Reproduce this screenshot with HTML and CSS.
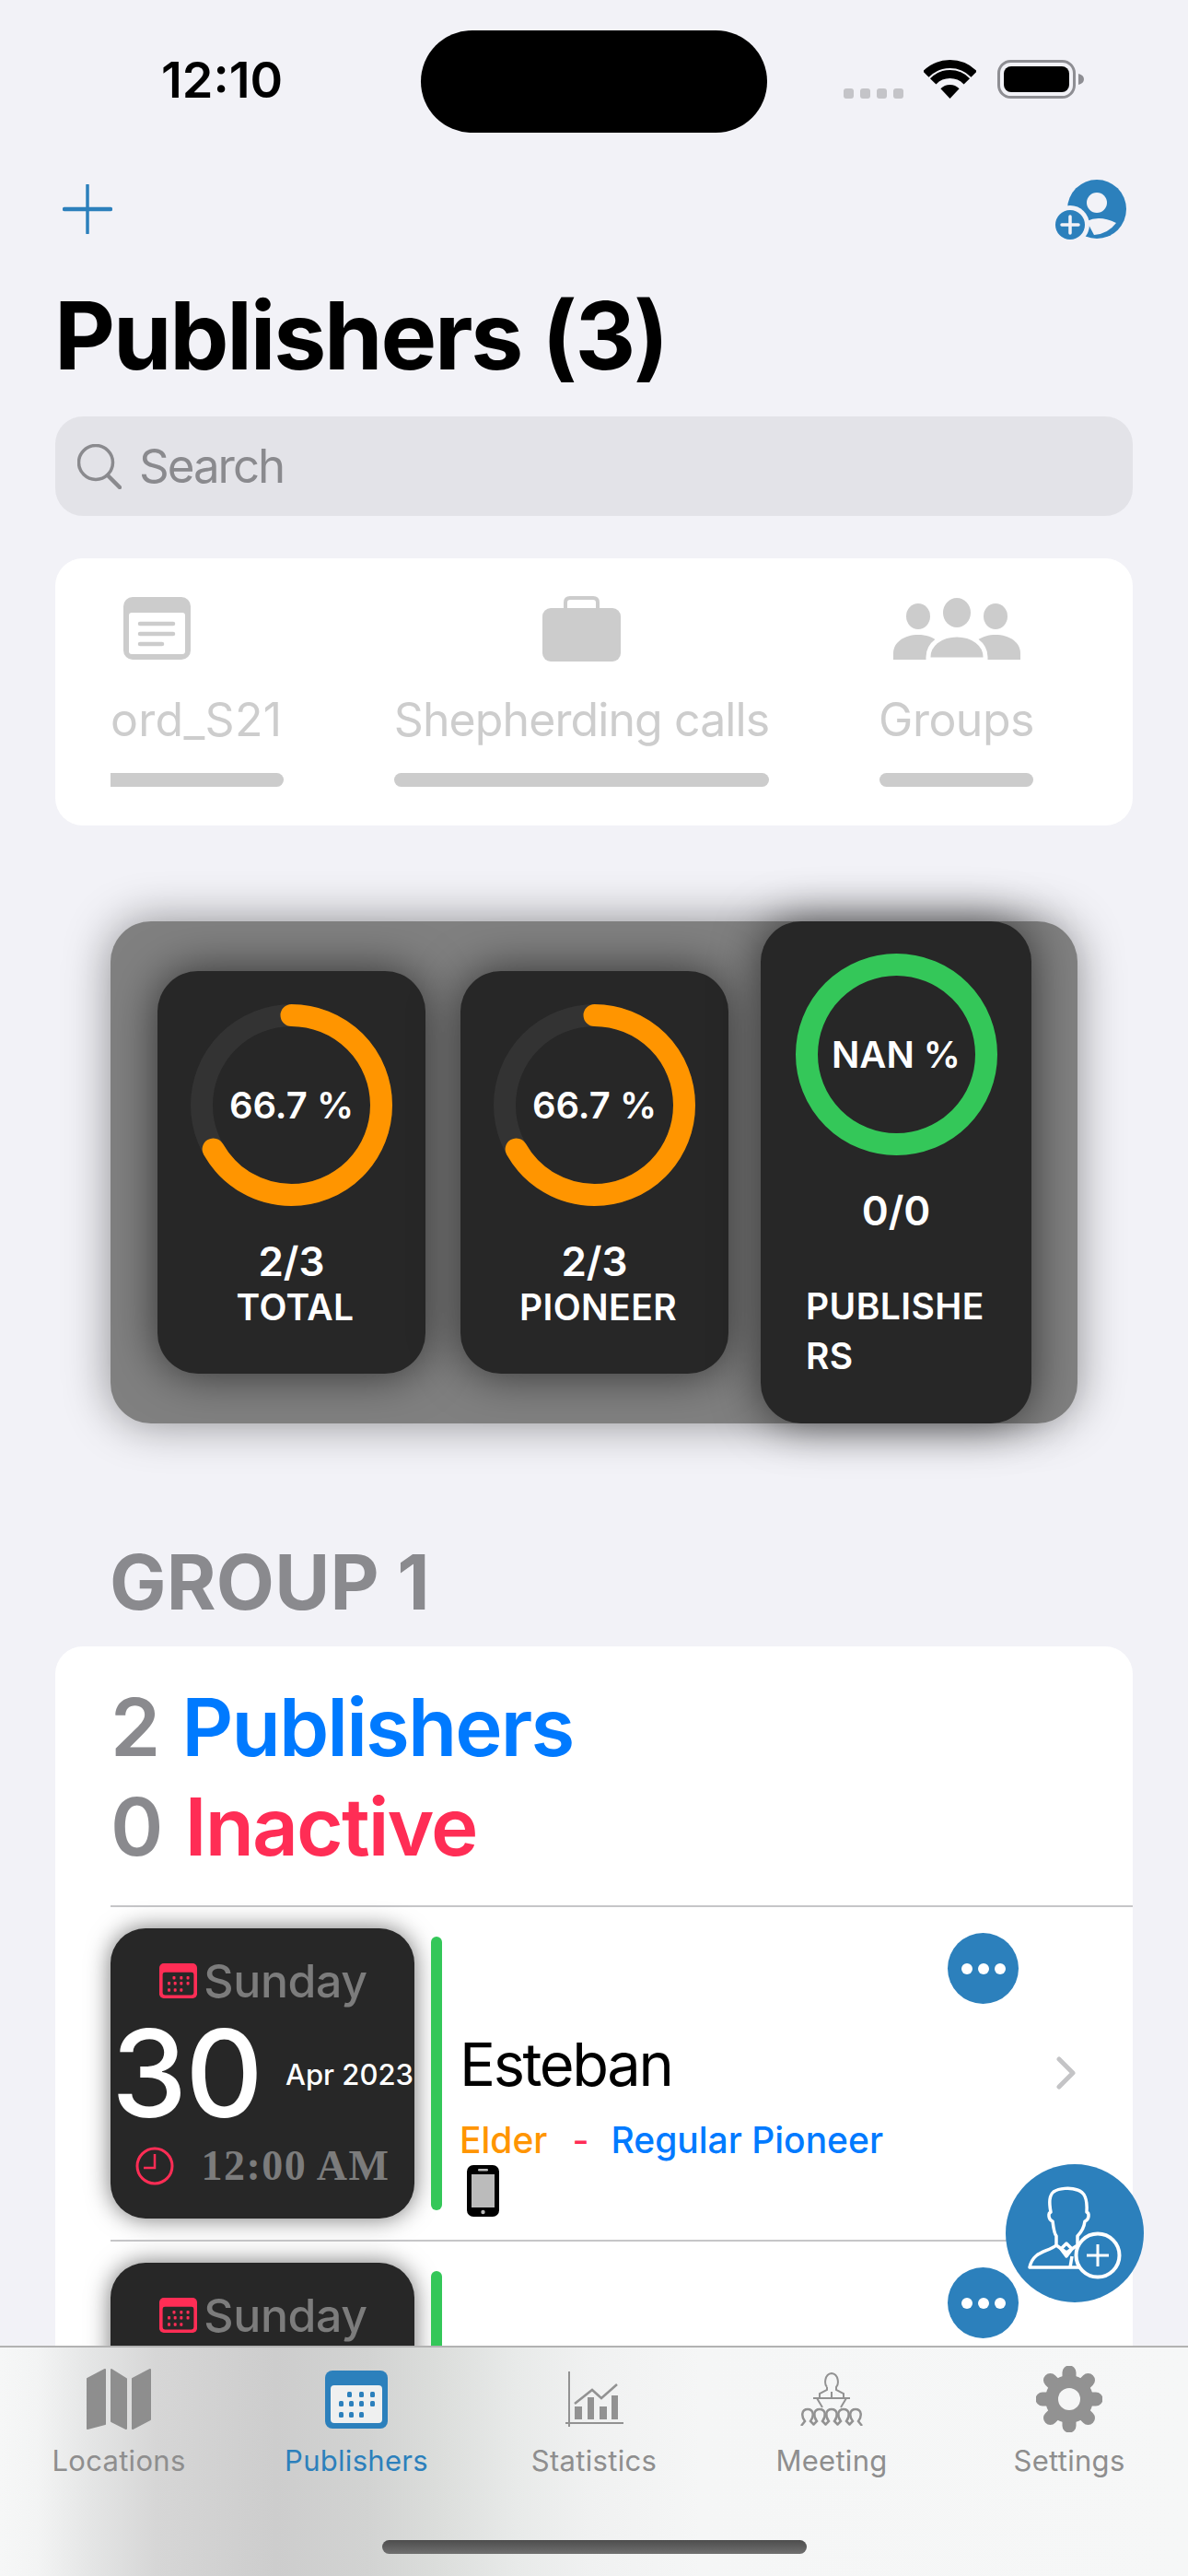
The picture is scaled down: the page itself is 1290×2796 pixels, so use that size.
FILE: index.html
```html
<!DOCTYPE html>
<html lang="en">
<head>
<meta charset="utf-8">
<title>Publishers</title>
<link rel="stylesheet" href="styles.css">
</head>
<body>
<div class="page">
  <div class="status">
    <div class="time">12:10</div>
    <div class="island"></div>
    <div class="status-icons">
      <div class="signal"><i></i><i></i><i></i><i></i></div>
      <svg class="wifi" width="57" height="42" viewBox="0 0 57 42"><path d="M2.3 15.6A36.5 36.5 0 0 1 54.7 15.6M10.2 23.3A25.5 25.5 0 0 1 46.8 23.3" fill="none" stroke="#000" stroke-width="9"/><path d="M28.5 42L18.4 31.3A14 14 0 0 1 38.6 31.3Z" fill="#000"/></svg>
      <svg class="battery" width="94" height="42" viewBox="0 0 94 42"><rect x="1.5" y="1.5" width="82" height="39" rx="13" fill="none" stroke="#8e8e93" stroke-width="3"/><rect x="7" y="7" width="71" height="28" rx="8" fill="#000"/><path d="M88 15C92 16 94 18 94 21S92 26 88 27Z" fill="#8e8e93"/></svg>
    </div>
  </div>

  <div class="navrow">
    <svg width="54" height="54" viewBox="0 0 54 54"><path d="M27 1V53" stroke="#2c80bc" stroke-width="3.5" stroke-linecap="round"/><path d="M2 27H52" stroke="#2c80bc" stroke-width="4.5" stroke-linecap="round"/></svg>
    <svg width="78" height="66" viewBox="0 0 78 66"><circle cx="45" cy="33" r="32" fill="#2c80bc"/><circle cx="45" cy="26" r="11" fill="#f2f2f7"/><path d="M34 46Q48 39 66 48Q57 60 42 61Z" fill="#f2f2f7"/><circle cx="16" cy="50" r="21" fill="#f2f2f7"/><circle cx="16" cy="50" r="16" fill="#2c80bc"/><path d="M16 41V59M7 50H25" stroke="#f2f2f7" stroke-width="3.5" stroke-linecap="round"/></svg>
  </div>

  <h1 class="title">Publishers (3)</h1>

  <div class="search">
    <svg width="48" height="49" viewBox="0 0 48 49"><circle cx="20" cy="20" r="18.5" fill="none" stroke="#8a8a8e" stroke-width="3.5"/><path d="M33 34L46 47" stroke="#8a8a8e" stroke-width="4.5" stroke-linecap="round"/></svg>
    <span>Search</span>
  </div>

  <div class="tabs-card">
    <div class="strip">
      <div class="strip-item first w1">
        <svg class="ticon doc" width="73" height="71" viewBox="0 0 73 71"><rect y="1" width="73" height="68" rx="10" fill="#ccc"/><rect x="6" y="18" width="61" height="45" rx="3" fill="#fff"/><path d="M18 30H54M18 41H54M18 52H42" stroke="#ccc" stroke-width="4.5" stroke-linecap="round"/></svg>
        <span class="strip-label">ord_S21</span>
        <div class="strip-bar"></div>
      </div>
      <div class="strip-item w2">
        <svg class="ticon" width="85" height="71" viewBox="0 0 85 71"><path d="M25 14V7Q25 2 30 2H55Q60 2 60 7V14" fill="none" stroke="#ccc" stroke-width="4"/><rect y="13" width="85" height="58" rx="9" fill="#ccc"/></svg>
        <span class="strip-label">Shepherding calls</span>
        <div class="strip-bar"></div>
      </div>
      <div class="strip-item w3">
        <svg class="ticon" width="138" height="71" viewBox="0 0 138 71"><ellipse cx="27" cy="22" rx="13" ry="14" fill="#ccc"/><ellipse cx="69" cy="18" rx="15" ry="16" fill="#ccc"/><ellipse cx="111" cy="22" rx="13" ry="14" fill="#ccc"/><path d="M0 69V62C0 50 12 42 27 42S54 50 54 62V69Z" fill="#ccc"/><path d="M84 69V62C84 50 96 42 111 42S138 50 138 62V69Z" fill="#ccc"/><path d="M38 69V66C38 52 52 42 69 42S100 52 100 66V69Z" fill="#ccc" stroke="#fff" stroke-width="5"/></svg>
        <span class="strip-label">Groups</span>
        <div class="strip-bar"></div>
      </div>
    </div>
  </div>

  <div class="panel">
    <div class="stat short">
      <div class="ring">
        <svg width="219" height="219" viewBox="0 0 219 219"><circle cx="109.5" cy="109.5" r="97.5" fill="none" stroke="#333" stroke-width="24"/><circle cx="109.5" cy="109.5" r="97.5" fill="none" stroke="#ff9500" stroke-width="24" stroke-linecap="round" stroke-dasharray="408.6 612.6" transform="rotate(-90 109.5 109.5)"/></svg>
        <span class="ring-text">66.7 %</span>
      </div>
      <div class="ratio">2/3</div>
      <div class="stat-label">TOTAL</div>
    </div>
    <div class="stat short">
      <div class="ring">
        <svg width="219" height="219" viewBox="0 0 219 219"><circle cx="109.5" cy="109.5" r="97.5" fill="none" stroke="#333" stroke-width="24"/><circle cx="109.5" cy="109.5" r="97.5" fill="none" stroke="#ff9500" stroke-width="24" stroke-linecap="round" stroke-dasharray="408.6 612.6" transform="rotate(-90 109.5 109.5)"/></svg>
        <span class="ring-text">66.7 %</span>
      </div>
      <div class="ratio">2/3</div>
      <div class="stat-label">PIONEER</div>
    </div>
    <div class="stat tall">
      <div class="ring">
        <svg width="219" height="219" viewBox="0 0 219 219"><circle cx="109.5" cy="109.5" r="97.5" fill="none" stroke="#34c759" stroke-width="24"/></svg>
        <span class="ring-text">NAN %</span>
      </div>
      <div class="ratio">0/0</div>
      <div class="stat-label wrap">PUBLISHERS</div>
    </div>
  </div>

  <h2 class="group-title">GROUP 1</h2>

  <div class="group-card">
    <div class="counts">
      <div class="count"><span class="grey">2</span> <span class="blue">Publishers</span></div>
      <div class="count"><span class="grey">0</span> <span class="red">Inactive</span></div>
    </div>

    <div class="row">
      <div class="date">
        <div class="date-day">
          <svg width="41" height="38" viewBox="0 0 68 63"><rect width="68" height="63" rx="8" fill="#ff2d55"/><rect x="6" y="16" width="56" height="41" rx="4" fill="#272727"/><g fill="#ff2d55"><rect x="24" y="23" width="5" height="6" rx="1.5"/><rect x="37" y="23" width="5" height="6" rx="1.5"/><rect x="49" y="23" width="5" height="6" rx="1.5"/><rect x="15" y="33" width="5" height="6" rx="1.5"/><rect x="26" y="33" width="5" height="6" rx="1.5"/><rect x="37" y="33" width="5" height="6" rx="1.5"/><rect x="49" y="33" width="5" height="6" rx="1.5"/><rect x="15" y="45" width="5" height="6" rx="1.5"/><rect x="26" y="45" width="5" height="6" rx="1.5"/><rect x="37" y="45" width="5" height="6" rx="1.5"/></g></svg>
          <span>Sunday</span>
        </div>
        <div class="date-mid"><span class="date-num">30</span><span class="date-month">Apr 2023</span></div>
        <div class="date-time">
          <svg width="42" height="42" viewBox="0 0 42 42"><circle cx="21" cy="21" r="19" fill="none" stroke="#ff2d55" stroke-width="3"/><path d="M21 8V23H9" fill="none" stroke="#ff2d55" stroke-width="2.5"/></svg>
          <span>12:00 AM</span>
        </div>
      </div>
      <div class="flag"></div>
      <div class="info">
        <div class="name">Esteban</div>
        <div class="roles"><span class="orange">Elder</span><span class="dash">-</span><span class="blue">Regular Pioneer</span></div>
        <svg class="phone" width="35" height="56" viewBox="0 0 35 56"><rect width="35" height="56" rx="7" fill="#000"/><rect x="5" y="10" width="25" height="36" fill="#bbb"/><rect x="12" y="4" width="11" height="2.5" rx="1.2" fill="#bbb"/><circle cx="17.5" cy="51" r="2.2" fill="#bbb"/></svg>
      </div>
      <svg class="chevron" width="21" height="36" viewBox="0 0 21 36"><path d="M3 3L18 18L3 33" fill="none" stroke="#c4c4c6" stroke-width="5" stroke-linecap="round" stroke-linejoin="round"/></svg>
      <div class="more"><i></i><i></i><i></i></div>
    </div>

    <div class="row">
      <div class="date">
        <div class="date-day">
          <svg width="41" height="38" viewBox="0 0 68 63"><rect width="68" height="63" rx="8" fill="#ff2d55"/><rect x="6" y="16" width="56" height="41" rx="4" fill="#272727"/><g fill="#ff2d55"><rect x="24" y="23" width="5" height="6" rx="1.5"/><rect x="37" y="23" width="5" height="6" rx="1.5"/><rect x="49" y="23" width="5" height="6" rx="1.5"/><rect x="15" y="33" width="5" height="6" rx="1.5"/><rect x="26" y="33" width="5" height="6" rx="1.5"/><rect x="37" y="33" width="5" height="6" rx="1.5"/><rect x="49" y="33" width="5" height="6" rx="1.5"/><rect x="15" y="45" width="5" height="6" rx="1.5"/><rect x="26" y="45" width="5" height="6" rx="1.5"/><rect x="37" y="45" width="5" height="6" rx="1.5"/></g></svg>
          <span>Sunday</span>
        </div>
      </div>
      <div class="flag"></div>
      <div class="more"><i></i><i></i><i></i></div>
    </div>
  </div>

  <div class="fab">
    <svg width="150" height="150" viewBox="0 0 150 150"><g fill="none" stroke="#fff" stroke-width="3.5" stroke-linejoin="round"><path d="M51 62C46 60 46 53 49 52C47 42 47 34 52 30C58 26 70 25 78 28C85 30 89 36 88 52C91 53 91 60 86 62C85 70 80 76 78 78V88L66 96L55 88V78C53 76 52 70 51 62Z"/><path d="M55 88C45 96 30 94 26 112H92L85 93L78 88"/><path d="M60 92L66 86L72 92L66 100Z"/><path d="M72 100L70 112"/></g><circle cx="100" cy="99" r="23.5" fill="#2c80bc" stroke="#fff" stroke-width="4"/><path d="M100 87V111M88 99H112" stroke="#fff" stroke-width="3"/></svg>
  </div>

  <div class="tabbar">
    <div class="tabs">
      <div class="tab">
        <div class="tab-icon"><svg width="70" height="66" viewBox="0 0 70 66"><g fill="#8e8e8e" stroke="#8e8e8e" stroke-width="2" stroke-linejoin="round"><path d="M1 11L20 1V60L1 65Z"/><path d="M27 1L43 11V65L27 57Z"/><path d="M50 11L69 1V55L50 65Z"/></g></svg></div>
        <span class="tab-label">Locations</span>
      </div>
      <div class="tab active">
        <div class="tab-icon"><svg width="68" height="63" viewBox="0 0 68 63"><rect width="68" height="63" rx="8" fill="#2c80bc"/><rect x="6" y="16" width="56" height="41" rx="4" fill="#eff0f0"/><g fill="#2c80bc"><rect x="24" y="23" width="5" height="6" rx="1.5"/><rect x="37" y="23" width="5" height="6" rx="1.5"/><rect x="49" y="23" width="5" height="6" rx="1.5"/><rect x="15" y="33" width="5" height="6" rx="1.5"/><rect x="26" y="33" width="5" height="6" rx="1.5"/><rect x="37" y="33" width="5" height="6" rx="1.5"/><rect x="49" y="33" width="5" height="6" rx="1.5"/><rect x="15" y="45" width="5" height="6" rx="1.5"/><rect x="26" y="45" width="5" height="6" rx="1.5"/><rect x="37" y="45" width="5" height="6" rx="1.5"/></g></svg></div>
        <span class="tab-label">Publishers</span>
      </div>
      <div class="tab">
        <div class="tab-icon"><svg width="63" height="60" viewBox="0 0 63 60"><path d="M4 0V60M0 56H63" stroke="#929292" stroke-width="2"/><g fill="#929292"><rect x="10" y="38" width="8" height="14"/><rect x="24" y="28" width="7" height="24"/><rect x="37" y="38" width="8" height="14"/><rect x="50" y="26" width="7" height="26"/></g><path d="M10 35L29 20L39 29L56 14" fill="none" stroke="#929292" stroke-width="2.5"/></svg></div>
        <span class="tab-label">Statistics</span>
      </div>
      <div class="tab">
        <div class="tab-icon"><svg width="68" height="58" viewBox="0 0 68 58"><g fill="none" stroke="#929292" stroke-width="2"><path d="M29 16C26 13 26 2 34 1C42 2 42 13 39 16V19L47 23V28M29 16V19L21 23V28M34 21V28M14 28H54M18 28L24 38M50 28L44 38"/></g><g fill="none" stroke="#929292" stroke-width="2.5"><path d="M1 58L5 53C1 48 1 40 8 40C15 40 15 48 11 53L15 57"/><path d="M14 57L18 53C14 48 14 40 21 40C28 40 28 48 24 53L28 57"/><path d="M27 57L31 53C27 48 27 40 34 40C41 40 41 48 37 53L41 57"/><path d="M40 57L44 53C40 48 40 40 47 40C54 40 54 48 50 53L54 57"/><path d="M53 57L57 53C53 48 53 40 60 40C67 40 67 48 63 53L67 58"/></g></svg></div>
        <span class="tab-label">Meeting</span>
      </div>
      <div class="tab">
        <div class="tab-icon"><svg width="72" height="72" viewBox="0 0 72 72"><g stroke="#929292" stroke-width="15" stroke-linecap="round"><path d="M36 7V65M7 36H65M15.5 15.5L56.5 56.5M56.5 15.5L15.5 56.5"/></g><circle cx="36" cy="36" r="26" fill="#929292"/><circle cx="36" cy="36" r="12" fill="#f5f6f6"/></svg></div>
        <span class="tab-label">Settings</span>
      </div>
    </div>
    <div class="home"></div>
  </div>
</div>
</body>
</html>
```
FILE: styles.css
```css
* { box-sizing: border-box; }
html, body { margin: 0; padding: 0; }
body { font-family: Inter, "Noto Sans", sans-serif; background: #f2f2f7; }
svg { display: block; flex: none; }

.page { position: relative; width: 1290px; height: 2796px; overflow: hidden; background: #f2f2f7; }

/* status bar */
.status { display: grid; grid-template-columns: 457px 376px 1fr; height: 194px; }
.time { padding: 57px 0 0 175px; font-size: 54px; line-height: 60px; font-weight: 600; color: #000; }
.island { margin-top: 33px; height: 111px; border-radius: 56px; background: #000; }
.status-icons { display: flex; align-items: flex-end; height: 107px; padding-left: 83px; }
.signal { display: flex; gap: 7px; }
.signal i { width: 11px; height: 11px; border-radius: 3px; background: #c4c4c8; }
.wifi { margin-left: 22px; }
.battery { margin-left: 23px; }

/* nav */
.navrow { display: flex; justify-content: space-between; align-items: center; height: 66px; padding: 0 66px 0 68px; }

.title { margin: 44px 0 0 59px; font-size: 102px; line-height: 120px; font-weight: 700; color: #000; letter-spacing: -2.2px; }

.search { display: flex; align-items: center; gap: 19px; margin: 28px 60px 0; padding-left: 24px; height: 108px; border-radius: 30px; background: #e3e3e8; }
.search span { font-size: 51px; line-height: 60px; color: #8a8a8e; letter-spacing: -2px; }

/* scrolling tabs */
.tabs-card { margin: 46px 60px 0; height: 290px; padding: 41px 0 0 60px; border-radius: 30px; background: #fff; }
.strip { display: flex; gap: 120px; }
.strip-item { display: flex; flex-direction: column; align-items: center; }
.strip-item.first { align-items: flex-start; }
.first .ticon { margin-left: 14px; }
.w1 { width: 188px; }
.w2 { width: 407px; }
.w3 { width: 167px; }
.strip-label { margin-top: 33px; font-size: 50px; line-height: 60px; color: #cdcdcd; white-space: nowrap; letter-spacing: -.5px; }
.w1 .strip-label { letter-spacing: .3px; }
.w2 .strip-label { letter-spacing: -.9px; }
.strip-bar { width: 100%; height: 15px; margin-top: 28px; border-radius: 8px; background: #ccc; }
.first .strip-bar { border-radius: 0 8px 8px 0; }

/* stats panel */
.panel { display: flex; gap: 38px; margin: 104px 0 0 120px; width: 1050px; height: 545px; padding-left: 51px; border-radius: 44px; background: #808080; box-shadow: 0 0 50px rgba(0, 0, 0, .42); }
.stat { flex: none; width: 291px; border-radius: 44px; background: #272727; color: #fff; box-shadow: 0 0 50px rgba(0, 0, 0, .62); }
.stat.short { height: 437px; margin-top: 54px; padding-top: 36px; }
.stat.tall { width: 294px; height: 545px; margin-left: -3px; padding-top: 35px; }
.ring { position: relative; width: 219px; height: 219px; margin: 0 auto; }
.ring-text { position: absolute; inset: 0; display: flex; align-items: center; justify-content: center; font-size: 40px; font-weight: 600; }
.ratio { margin-top: 32px; font-size: 44px; line-height: 56px; font-weight: 600; text-align: center; }
.stat-label { margin-top: -5px; padding-left: 8px; font-size: 39px; line-height: 54px; font-weight: 600; text-align: center; letter-spacing: .4px; }
.stat-label.wrap { margin-top: 49px; padding: 0 40px 0 49px; text-align: left; word-break: break-all; }

/* group */
.group-title { margin: 123px 0 0 119px; font-size: 82px; line-height: 100px; font-weight: 700; color: #8a8a8e; letter-spacing: .2px; }
.group-card { margin: 19px 60px 0; padding-left: 60px; border-radius: 30px; background: #fff; height: 1100px; }
.counts { padding: 34px 0 31px 0; }
.count { font-size: 87px; line-height: 108px; font-weight: 600; letter-spacing: -1.9px; word-spacing: 5px; }
.grey { color: #8a8a8e; }
.blue { color: #007aff; }
.red { color: #ff2d55; }
.orange { color: #ff9500; }

.row { position: relative; display: flex; padding: 23px 0; border-top: 2px solid #c6c6c8; height: 363px; }
.date { flex: none; display: flex; flex-direction: column; width: 330px; height: 315px; padding-top: 34px; border-radius: 38px; background: #272727; box-shadow: 0 0 26px rgba(0, 0, 0, .55); }
.date-day { display: flex; align-items: center; justify-content: center; gap: 7px; height: 46px; padding-left: 2px; font-size: 50px; font-weight: 500; color: #7c7c7c; letter-spacing: -.4px; }
.date-mid { display: flex; align-items: center; justify-content: space-between; height: 124px; margin-top: 16px; padding: 0 1px 0 1px; color: #fff; }
.date-num { font-size: 131px; line-height: 124px; font-weight: 500; letter-spacing: -2px; }
.date-month { font-size: 31px; font-weight: 500; white-space: nowrap; }
.date-time { display: flex; align-items: center; justify-content: center; gap: 30px; margin-top: 11px; font-family: "Liberation Serif", serif; font-size: 46px; font-weight: 700; color: #7c7c7c; letter-spacing: 1.5px; }
.flag { flex: none; width: 12px; height: 297px; margin: 9px 0 0 18px; border-radius: 6px; background: #34c759; }
.info { flex: 1; min-width: 0; padding: 108px 0 0 19px; }
.name { font-size: 65px; line-height: 80px; color: #000; letter-spacing: -2.4px; }
.roles { display: flex; margin-top: 18px; font-size: 39px; line-height: 48px; font-weight: 500; }
.dash { margin: 0 24px 0 27px; color: #ff2d55; }
.phone { margin: 3px 0 0 8px; }
.chevron { margin: 139px 62px 0 0; }
.more { position: absolute; left: 909px; top: 28px; display: flex; align-items: center; justify-content: center; gap: 6px; width: 77px; height: 77px; border-radius: 50%; background: #2c80bc; }
.more i { width: 12px; height: 12px; border-radius: 50%; background: #fff; }

.fab { position: absolute; left: 1092px; top: 2349px; width: 150px; height: 150px; border-radius: 50%; background: #2c80bc; }

/* tab bar */
.tabbar { position: absolute; left: 0; right: 0; bottom: 0; height: 250px; display: flex; flex-direction: column; border-top: 2px solid #b2b2b2; background: linear-gradient(90deg, #f6f7f7 0, #f3f4f4 40px, #e4e5e5 100px, #d6d6d6 170px, #cdcdcd 300px, #d2d3d2 400px, #dcdedc 480px, #e8eae9 560px, #f0f1f1 640px, #f5f6f6 760px, #f6f7f7 1290px); }
.tabs { display: grid; grid-template-columns: repeat(5, 1fr); padding-top: 16px; }
.tab { display: flex; flex-direction: column; align-items: center; color: #8e8e8e; }
.tab.active { color: #2c80bc; }
.tab-icon { display: flex; align-items: center; justify-content: center; height: 80px; }
.tab-label { margin-top: 7px; font-size: 31px; line-height: 40px; letter-spacing: .3px; }
.home { width: 461px; height: 15px; margin: 66px auto 0; border-radius: 8px; background: linear-gradient(#4d4d4d, #707070); }
```
